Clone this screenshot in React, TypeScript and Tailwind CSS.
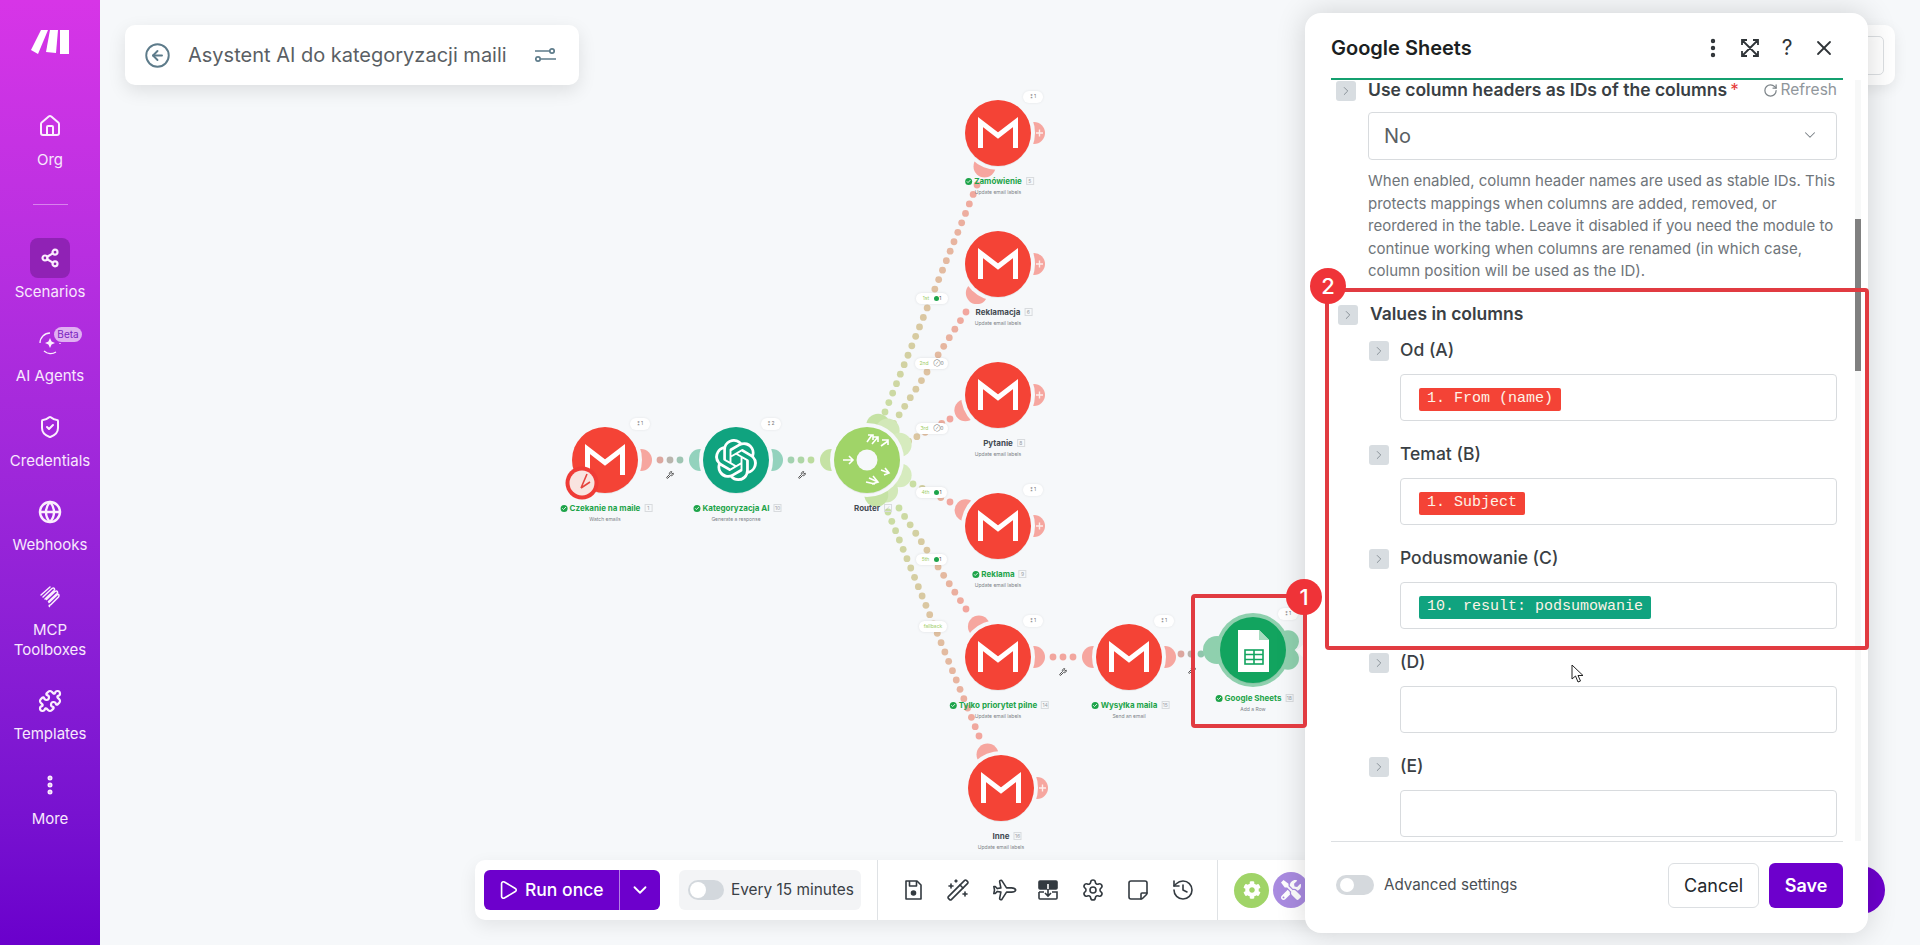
import type { ReactNode } from "react";
import {
  Check,
  ChevronDown,
  ChevronRight,
  CircleArrowLeft,
  EllipsisVertical,
  Globe,
  History,
  House,
  Play,
  Puzzle,
  RotateCw,
  Settings,
  Share2,
  ShieldCheck,
  StickyNote,
  Plane,
  WandSparkles,
  Wrench,
  X,
} from "lucide-react";
import { FaCog, FaTools } from "react-icons/fa";
import { SiOpenai } from "react-icons/si";

const mix = (a: string, b: string, t: number) => {
  const ch = (hex: string, i: number) => parseInt(hex.slice(1 + i * 2, 3 + i * 2), 16);
  const out = [0, 1, 2].map((i) => Math.round(ch(a, i) + (ch(b, i) - ch(a, i)) * t));
  return `rgb(${out.join(",")})`;
};

const GREEN_DOT = "#c9dea3";
const RED_DOT = "#f2a69e";

// dotted links of the scenario
const links = [
  { x1: 885, y1: 412, x2: 977, y2: 185, from: GREEN_DOT, to: RED_DOT },
  { x1: 888, y1: 432, x2: 966, y2: 312, from: GREEN_DOT, to: RED_DOT },
  { x1: 892, y1: 450, x2: 950, y2: 419, from: GREEN_DOT, to: RED_DOT },
  { x1: 913, y1: 484, x2: 950, y2: 502, from: GREEN_DOT, to: RED_DOT },
  { x1: 899, y1: 508, x2: 966, y2: 609, from: GREEN_DOT, to: RED_DOT },
  { x1: 888, y1: 512, x2: 979, y2: 736, from: GREEN_DOT, to: RED_DOT },
];

const straightDots = [
  { x: 660, y: 460, c: "#dca79f" },
  { x: 670, y: 460, c: "#b9b5ad" },
  { x: 680, y: 460, c: "#9ec5b3" },
  { x: 791, y: 460, c: "#a3d2b0" },
  { x: 801, y: 460, c: "#aed6a6" },
  { x: 811, y: 460, c: "#bcdc9f" },
  { x: 1053, y: 657, c: "#f2a69e" },
  { x: 1063, y: 657, c: "#f2a69e" },
  { x: 1073, y: 657, c: "#f2a69e" },
  { x: 1181, y: 654, c: "#dca79f" },
  { x: 1191, y: 654, c: "#b9b5ad" },
  { x: 1201, y: 654, c: "#8fc6ac" },
];

function Links() {
  return (
    <svg className="absolute left-0 top-0 w-[1920px] h-[945px]" viewBox="0 0 1920 945">
      {links.map((l, i) => {
        const len = Math.hypot(l.x2 - l.x1, l.y2 - l.y1);
        const n = Math.round(len / 10);
        return Array.from({ length: n + 1 }, (_, k) => (
          <circle
            key={`${i}-${k}`}
            cx={l.x1 + ((l.x2 - l.x1) * k) / n}
            cy={l.y1 + ((l.y2 - l.y1) * k) / n}
            r={3.4}
            fill={mix(l.from, l.to, k / n)}
          />
        ));
      })}
      {straightDots.map((d, i) => (
        <circle key={i} cx={d.x} cy={d.y} r={3.4} fill={d.c} />
      ))}
    </svg>
  );
}

function GmailGlyph() {
  return (
    <path
      d="M-17.5 15V-11L0 2.5L17.5 -11V15"
      fill="none"
      stroke="#fff"
      strokeWidth={5}
      strokeLinejoin="miter"
    />
  );
}

function RouterGlyph() {
  const arrows = [
    "M-24 0h10M-18 -4l4 4l-4 4",
    "M5 -16l6 -7M6 -23h5v5",
    "M0 -18l5 -7M1 -25h5v5",
    "M14 -14l7 -5M15 -20h6v5",
    "M14 10l8 3M18 8l4 5l-5 2",
    "M2 18l9 4M6 16l5 6l-6 2",
    "M-1 22l9 2",
  ];
  return (
    <>
      <circle r={10.5} fill="#f6f8fa" />
      {arrows.map((d, i) => (
        <path key={i} d={d} fill="none" stroke="#fff" strokeWidth={1.6} />
      ))}
    </>
  );
}

function SheetGlyph() {
  return (
    <>
      <path d="M-15 -20H6L16 -10V22H-15Z" fill="#fff" />
      <path d="M6 -20V-10H16Z" fill="#a7dcc0" />
      <rect x={-8} y={0} width={18} height={14} fill="none" stroke="#12a45f" strokeWidth={1.6} />
      <path d="M-8 4.5H10M-8 9.5H10M1 0V14" stroke="#12a45f" strokeWidth={1.6} />
    </>
  );
}

type Ear = { angle: number; r?: number; fill: string; plus?: boolean };

function Ears({ ears }: { ears: Ear[] }) {
  return (
    <>
      {ears.map((e, i) => {
        const a = (e.angle * Math.PI) / 180;
        const x = Math.cos(a) * 36;
        const y = Math.sin(a) * 36;
        return (
          <g key={i}>
            <circle cx={x} cy={y} r={e.r ?? 11} fill={e.fill} />
            {e.plus && (
              <path d={`M${x + 2} ${y}h7M${x + 5.5} ${y - 3.5}v7`} stroke="#fff" strokeWidth={1.4} opacity={0.8} />
            )}
          </g>
        );
      })}
    </>
  );
}

type NodeProps = {
  pos: string;
  color: string;
  ears: Ear[];
  glyph: ReactNode;
  label: string;
  sub?: string;
  num: string;
  ok?: boolean;
  tag?: string;
  ring?: string;
  extra?: ReactNode;
};

function ScenarioNode({ pos, color, ears, glyph, label, sub, num, ok, tag, ring, extra }: NodeProps) {
  return (
    <div className={`absolute w-[90px] h-[90px] ${pos}`}>
      <svg className="absolute inset-0 w-[90px] h-[90px] overflow-visible" viewBox="-45 -45 90 90">
        <Ears ears={ears} />
        <circle r={37} fill={ring ?? "#f6f8fa"} />
        <circle r={33} cy={1} fill="#000" opacity={0.06} />
        <circle r={33} fill={color} />
        {glyph}
        {extra}
      </svg>
      {tag && (
        <div className="absolute left-[70px] top-[3px] w-[20px] h-[12px] rounded-full bg-white shadow-[0_0_3px_rgba(0,0,0,0.08)] flex items-center justify-center text-[5px] text-[#777]">
          ⁑ {tag}
        </div>
      )}
      <div className="absolute left-1/2 top-[88px] -translate-x-1/2 whitespace-nowrap">
        <span
          className={`relative block text-[8px] leading-[10px] font-bold ${ok ? "text-[#1ea44a]" : "text-[#444b52]"}`}
        >
          {ok && (
            <span className="absolute right-full mr-[2px] top-[1.5px] w-[7px] h-[7px] rounded-full bg-[#1ea44a] flex items-center justify-center">
              <Check className="w-[5px] h-[5px] text-white" strokeWidth={4} />
            </span>
          )}
          {label}
          <span className="absolute left-full ml-[4px] top-[1px] w-[8px] h-[8px] border border-[#d8dbde] flex items-center justify-center text-[5px] leading-none font-normal text-[#9aa0a5]">
            {num}
          </span>
        </span>
      </div>
      {sub && (
        <div className="absolute left-1/2 top-[101px] -translate-x-1/2 whitespace-nowrap text-[5px] leading-[7px] text-[#7c8288]">
          {sub}
        </div>
      )}
    </div>
  );
}

const RED = "#f44336";
const RED_EAR = "#f6a69f";
const GREEN_EAR = "#c5e2a4";

function RouteTag({ pos, text, count }: { pos: string; text: string; count?: "ok" | "off" }) {
  return (
    <div
      className={`absolute h-[11px] rounded-full bg-white shadow-[0_0_3px_rgba(0,0,0,0.1)] flex items-center justify-center gap-[5px] text-[5px] text-[#9ccc65] ${pos}`}
    >
      <span>{text}</span>
      {count === "ok" && (
        <span className="flex items-center text-[#555]">
          <span className="w-[5px] h-[5px] rounded-full bg-[#1ea44a]" />1
        </span>
      )}
      {count === "off" && <span className="text-[#777]">⊘0</span>}
    </div>
  );
}

function Canvas() {
  const glyph = <GmailGlyph />;
  return (
    <>
      <Links />
      <ScenarioNode
        pos="left-[560px] top-[415px]"
        color={RED}
        glyph={glyph}
        ears={[{ angle: 0, fill: RED_EAR }]}
        label="Czekanie na maile"
        sub="Watch emails"
        num="1"
        ok
        tag="1"
        extra={
          <g transform="translate(-23 23)">
            <circle r={16.5} fill="#ef3b36" />
            <circle r={12.5} fill="#f9e4e0" />
            <path d="M-1 5L5 -9M-1 5L8 -1" stroke="#e5453e" strokeWidth={1.6} fill="none" />
          </g>
        }
      />
      <ScenarioNode
        pos="left-[691px] top-[415px]"
        color="#10a37f"
        glyph={<g />}
        ears={[
          { angle: 180, fill: "#93d2bd" },
          { angle: 0, fill: "#93d2bd" },
        ]}
        label="Kategoryzacja AI"
        sub="Generate a response"
        num="10"
        ok
        tag="2"
      />
      <div className="absolute left-[715px] top-[439px] text-white">
        <SiOpenai size={42} />
      </div>
      <ScenarioNode
        pos="left-[822px] top-[415px]"
        color="#a0d468"
        glyph={<RouterGlyph />}
        ears={[
          { angle: 180, fill: GREEN_EAR },
          { angle: -72, r: 12, fill: GREEN_EAR },
          { angle: -55, r: 12, fill: "#d2e8b8" },
          { angle: -25, r: 12, fill: "#d6ebbe" },
          { angle: 25, r: 12, fill: "#d6ebbe" },
          { angle: 58, r: 12, fill: "#d2e8b8" },
          { angle: 75, r: 12, fill: GREEN_EAR },
        ]}
        label="Router"
        num="⟋"
      />
      <ScenarioNode
        pos="left-[953px] top-[88px]"
        color={RED}
        glyph={glyph}
        ears={[
          { angle: 0, fill: RED_EAR, plus: true },
          { angle: 112, fill: RED_EAR },
        ]}
        label="Zamówienie"
        sub="Update email labels"
        num="5"
        ok
        tag="1"
      />
      <ScenarioNode
        pos="left-[953px] top-[219px]"
        color={RED}
        glyph={glyph}
        ears={[
          { angle: 0, fill: RED_EAR, plus: true },
          { angle: 126, fill: RED_EAR },
        ]}
        label="Reklamacja"
        sub="Update email labels"
        num="6"
      />
      <ScenarioNode
        pos="left-[953px] top-[350px]"
        color={RED}
        glyph={glyph}
        ears={[
          { angle: 0, fill: RED_EAR, plus: true },
          { angle: 155, fill: RED_EAR },
        ]}
        label="Pytanie"
        sub="Update email labels"
        num="8"
      />
      <ScenarioNode
        pos="left-[953px] top-[481px]"
        color={RED}
        glyph={glyph}
        ears={[
          { angle: 0, fill: RED_EAR, plus: true },
          { angle: 206, fill: RED_EAR },
        ]}
        label="Reklama"
        sub="Update email labels"
        num="9"
        ok
        tag="1"
      />
      <ScenarioNode
        pos="left-[953px] top-[612px]"
        color={RED}
        glyph={glyph}
        ears={[
          { angle: 0, fill: RED_EAR },
          { angle: 238, fill: RED_EAR },
        ]}
        label="Tylko priorytet pilne"
        sub="Update email labels"
        num="14"
        ok
        tag="1"
      />
      <ScenarioNode
        pos="left-[1084px] top-[612px]"
        color={RED}
        glyph={glyph}
        ears={[
          { angle: 180, fill: RED_EAR },
          { angle: 0, fill: RED_EAR },
        ]}
        label="Wysyłka maila"
        sub="Send an email"
        num="15"
        ok
        tag="1"
      />
      <ScenarioNode
        pos="left-[956px] top-[743px]"
        color={RED}
        glyph={glyph}
        ears={[
          { angle: 0, fill: RED_EAR, plus: true },
          { angle: 248, fill: RED_EAR },
        ]}
        label="Inne"
        sub="Update email labels"
        num="16"
      />
      <ScenarioNode
        pos="left-[1208px] top-[605px]"
        color="#12a45f"
        ring="#8fd0ae"
        glyph={<SheetGlyph />}
        ears={[
          { angle: 180, r: 14, fill: "#8fd0ae" },
          { angle: -14, r: 11, fill: "#8fd0ae" },
          { angle: 14, r: 11, fill: "#8fd0ae" },
        ]}
        label="Google Sheets"
        sub="Add a Row"
        num="18"
        ok
        tag="1"
      />
      <div className="absolute left-[1296px] top-[643px] w-0 h-0 border-y-[8px] border-y-transparent border-r-[9px] border-r-white" />

      <RouteTag pos="left-[916px] top-[293px] w-[32px]" text="1st" count="ok" />
      <RouteTag pos="left-[915px] top-[358px] w-[33px]" text="2nd" count="off" />
      <RouteTag pos="left-[916px] top-[423px] w-[32px]" text="3rd" count="off" />
      <RouteTag pos="left-[916px] top-[487px] w-[31px]" text="4th" count="ok" />
      <RouteTag pos="left-[916px] top-[554px] w-[31px]" text="5th" count="ok" />
      <RouteTag pos="left-[919px] top-[621px] w-[28px]" text="fallback" />

      {["left-[666px] top-[471px]", "left-[798px] top-[471px]", "left-[1059px] top-[668px]", "left-[1188px] top-[666px]"].map(
        (pos) => (
          <Wrench key={pos} className={`absolute w-[8px] h-[8px] text-[#555] ${pos}`} strokeWidth={3} />
        )
      )}
    </>
  );
}

function SideItem({ icon, label, active }: { icon: ReactNode; label: ReactNode; active?: boolean }) {
  return (
    <div className="relative flex flex-col items-center">
      <div
        className={`w-[40px] h-[40px] rounded-[8px] flex items-center justify-center ${active ? "bg-[#9022b5]" : ""}`}
      >
        {icon}
      </div>
      <div className="mt-[3.5px] text-[15px] leading-[20px] text-center text-[#f8e8fd]">{label}</div>
    </div>
  );
}

function Sidebar() {
  const iconCls = "w-[24px] h-[24px] text-[#fbeefe]";
  return (
    <aside className="w-[100px] h-full shrink-0 bg-gradient-to-b from-[#d735e7] to-[#6a00cc] flex flex-col items-center">
      <svg className="mt-[29px] w-[38px] h-[25px]" viewBox="0 0 38 25" fill="#fff">
        <path d="M0 21L10 1h7L7 25Z" />
        <path d="M19 1h8l-2 23l-10 -1Z" />
        <path d="M29 1h9v24h-9Z" />
      </svg>
      <div className="mt-[52px]">
        <SideItem icon={<House className={iconCls} />} label="Org" />
      </div>
      <div className="mt-[34.5px] w-[35px] h-px bg-white/40" />
      <div className="mt-[33px] flex flex-col gap-[21px]">
        <SideItem active icon={<Share2 className="w-[20px] h-[20px] text-[#fbeefe]" strokeWidth={2.6} />} label="Scenarios" />
        <div className="relative">
          <SideItem
            icon={
              <svg className={iconCls} viewBox="0 0 24 24" fill="none" stroke="currentColor" strokeWidth={1.3}>
                <path d="M12 7l1.6 3.4L17 12l-3.4 1.6L12 17l-1.6-3.4L7 12l3.4-1.6Z" fill="currentColor" stroke="none" />
                <path d="M2 12A10 10 0 0 1 12 2M6 20a10 10 0 0 0 12 1M22 13v-1" />
              </svg>
            }
            label="AI Agents"
          />
          <div className="absolute left-1/2 ml-[4px] top-[4px] w-[28px] h-[15px] rounded-full bg-[#e0b0f2] flex items-center justify-center text-[10px] leading-none text-[#7a1fc0]">
            Beta
          </div>
        </div>
        <SideItem icon={<ShieldCheck className={iconCls} />} label="Credentials" />
        <SideItem icon={<Globe className={iconCls} strokeWidth={2.4} />} label="Webhooks" />
        <SideItem
          icon={
            <svg className={iconCls} viewBox="0 0 24 24" fill="none" stroke="currentColor" strokeWidth={1.5} strokeLinecap="round">
              <path d="M3 11L12 3M5 13L14 4.500c2-1.500 3.500 .5 2 2L7 15M8.500 15.500L17 7.500c2-1.500 3.500 .5 2 2l-8.500 8M11 18.500L19.500 10.500c1.500-.5 2 1 1 2.500L13 20.500c-1 1.200-2.500 .5-1.500 2" />
            </svg>
          }
          label={
            <>
              MCP
              <br />
              Toolboxes
            </>
          }
        />
        <SideItem icon={<Puzzle className={iconCls} strokeWidth={2.2} />} label="Templates" />
        <SideItem icon={<EllipsisVertical className={iconCls} strokeWidth={3} />} label="More" />
      </div>
    </aside>
  );
}

function TitleBar() {
  return (
    <div className="absolute left-[125px] top-[25px] w-[454px] h-[60px] rounded-[10px] bg-white shadow-[0_6px_18px_rgba(0,0,0,0.1)] flex items-center pl-[19px]">
      <CircleArrowLeft className="w-[27px] h-[27px] text-[#5d7b8a]" strokeWidth={1.7} />
      <span className="ml-[17px] text-[20px] text-[#5a5f64] whitespace-nowrap">Asystent AI do kategoryzacji maili</span>
      <svg className="ml-[28px] w-[21px] h-[16px] text-[#5d7b8a]" viewBox="0 0 21 16" fill="none" stroke="currentColor" strokeWidth={1.7}>
        <path d="M0 4H15M6 12H21" />
        <circle cx={17} cy={4} r={2.2} fill="#fff" />
        <circle cx={3} cy={12} r={2.2} fill="#fff" />
      </svg>
    </div>
  );
}

function Toolbar() {
  const tool = "w-[24px] h-[24px] text-[#333a40]";
  return (
    <div className="absolute left-[475px] top-[860px] w-[860px] h-[60px] rounded-[10px] bg-white shadow-[0_6px_18px_rgba(0,0,0,0.08)] flex items-center pl-[9px]">
      <div className="w-[176px] h-[40px] rounded-[6px] bg-[#6d00cc] text-white flex items-center">
        <div className="w-[136px] flex items-center pl-[13px] border-r border-white/50 h-full">
          <Play className="w-[22px] h-[24px]" strokeWidth={1.8} />
          <span className="ml-[6px] text-[17.500px] font-medium whitespace-nowrap">Run once</span>
        </div>
        <ChevronDown className="ml-[9px] w-[22px] h-[22px]" strokeWidth={2} />
      </div>
      <div className="ml-[19px] w-[182px] h-[40px] rounded-[6px] bg-[#f3f4f6] flex items-center pl-[9px]">
        <div className="w-[36px] h-[20px] rounded-full bg-[#d3d8dd] flex items-center pl-[2px]">
          <div className="w-[16px] h-[16px] rounded-full bg-white" />
        </div>
        <span className="ml-[7px] text-[15.400px] text-[#3a4046] whitespace-nowrap">Every 15 minutes</span>
      </div>
      <div className="ml-[16px] w-px h-[60px] bg-[#dfe2e5]" />
      <div className="ml-[23px] flex items-center gap-[21px]">
        <svg className={tool} viewBox="0 0 24 24" fill="none" stroke="currentColor" strokeWidth={1.6} strokeLinejoin="round">
          <path d="M5 3h11l4 4v14H5Z" />
          <path d="M8.500 3v5h7V3" />
          <circle cx={12.500} cy={15} r={2} fill="currentColor" />
        </svg>
        <WandSparkles className={tool} strokeWidth={1.6} />
        <Plane className={`${tool} rotate-45`} strokeWidth={1.6} />
        <svg className={tool} viewBox="0 0 24 24" fill="none" stroke="currentColor" strokeWidth={1.6}>
          <rect x={3} y={3} width={18} height={8} rx={1} fill="currentColor" />
          <path d="M3 14v6a1 1 0 0 0 1 1h16a1 1 0 0 0 1-1v-6h-5M8 14H3" />
          <path d="M12 9v9M9 15l3 3l3-3" stroke="currentColor" />
          <path d="M12 6v5" stroke="#fff" />
        </svg>
        <Settings className={tool} strokeWidth={1.6} />
        <StickyNote className={`${tool} -scale-y-100`} strokeWidth={1.6} />
        <History className={tool} strokeWidth={1.6} />
      </div>
      <div className="ml-[22px] w-px h-[60px] bg-[#dfe2e5]" />
      <div className="ml-[16px] w-[35px] h-[35px] rounded-full bg-[#a0d468] flex items-center justify-center text-white">
        <FaCog size={18} />
      </div>
      <div className="ml-[4px] w-[36px] h-[36px] rounded-full bg-[#a98be0] flex items-center justify-center text-white">
        <FaTools size={20} />
      </div>
    </div>
  );
}

function Toggle() {
  return (
    <div className="w-[38px] h-[20px] rounded-full bg-[#d5d9dd] flex items-center pl-[4px]">
      <div className="w-[14px] h-[14px] rounded-full bg-white" />
    </div>
  );
}

function Chip() {
  return (
    <div className="shrink-0 w-[20px] h-[20px] rounded-[3px] bg-[#d8dde1] flex items-center justify-center">
      <ChevronRight className="w-[14px] h-[14px] text-[#7e878e]" strokeWidth={1.5} />
    </div>
  );
}

function ColumnField({ label, tag, tagColor }: { label: string; tag?: string; tagColor?: string }) {
  return (
    <div className="pl-[33px] h-[104px]">
      <div className="flex items-center h-[20px]">
        <Chip />
        <span className="ml-[11px] text-[17.500px] font-medium text-[#3a3f44]">{label}</span>
      </div>
      <div className="mt-[13px] ml-[31px] h-[47px] rounded-[4px] border border-[#d8dbde] flex items-center pl-[18px] pt-[5px]">
        {tag && (
          <span
            className={`h-[23px] px-[8px] rounded-[2px] text-[15px] leading-[22px] text-[#fdf3e7] whitespace-nowrap font-['Liberation_Mono',monospace] ${tagColor}`}
          >
            {tag}
          </span>
        )}
      </div>
    </div>
  );
}

function Panel() {
  return (
    <div className="absolute left-[1305px] top-[13px] w-[563px] h-[920px] rounded-[16px] bg-white shadow-[0_0_30px_rgba(0,0,0,0.16)] flex flex-col">
      <div className="h-[67px] mx-[26px] mr-[25px] border-b-2 border-[#14a06f] flex items-center pt-[4px]">
        <span className="text-[20px] font-semibold text-[#1c1f22]">Google Sheets</span>
        <div className="ml-auto flex items-center gap-[13px] pr-[7px] text-[#2f3438]">
          <EllipsisVertical className="w-[24px] h-[24px]" strokeWidth={2.4} />
          <svg className="w-[24px] h-[24px]" viewBox="0 0 24 24" fill="none" stroke="currentColor" strokeWidth={1.8}>
            <path d="M4 9V4h5M15 4h5v5M20 15v5h-5M9 20H4v-5M4 4l16 16M20 4L4 20" />
          </svg>
          <span className="w-[24px] h-[24px] flex items-center justify-center text-[21px] leading-none">?</span>
          <X className="w-[24px] h-[24px]" strokeWidth={1.8} />
        </div>
      </div>
      <div className="flex-1 min-h-0 flex overflow-hidden">
        <div className="flex-1 min-w-0 pl-[31px] pr-[18px] pt-[1px]">
          <div className="flex items-center h-[20px]">
            <Chip />
            <span className="ml-[12px] -mt-[2px] text-[17.500px] leading-[18px] font-semibold text-[#3a3f44] whitespace-nowrap">
              Use column headers as IDs of the columns
            </span>
            <span className="ml-[3px] -mt-[2px] text-[17px] leading-[18px] text-[#e53935]">*</span>
            <RotateCw className="ml-auto -mt-[2px] w-[15px] h-[15px] text-[#7d8489]" />
            <span className="ml-[3px] -mt-[2px] text-[15.500px] leading-[18px] text-[#90969b]">Refresh</span>
          </div>
          <div className="mt-[11px] ml-[32px] h-[48px] rounded-[4px] border border-[#d8dbde] flex items-center px-[15px]">
            <span className="text-[20px] text-[#5a5f64]">No</span>
            <ChevronDown className="ml-auto mr-[2px] mb-[3px] w-[18px] h-[18px] text-[#777e84]" strokeWidth={1.4} />
          </div>
          <p className="mt-[10px] ml-[32px] text-[15px] leading-[22.500px] text-[#6f757a]">
            When enabled, column header names are used as stable IDs. This protects mappings when columns are added,
            removed, or reordered in the table. Leave it disabled if you need the module to continue working when columns
            are renamed (in which case, column position will be used as the ID).
          </p>
          <div className="mt-[22px] pl-[2px] flex items-center h-[20px]">
            <Chip />
            <span className="ml-[12px] text-[17.500px] font-semibold text-[#3a3f44]">Values in columns</span>
          </div>
          <div className="mt-[16px]">
            <ColumnField label="Od (A)" tag="1. From (name)" tagColor="bg-[#f44336]" />
            <ColumnField label="Temat (B)" tag="1. Subject" tagColor="bg-[#f44336]" />
            <ColumnField label="Podusmowanie (C)" tag="10. result: podsumowanie" tagColor="bg-[#10a37f]" />
            <ColumnField label="(D)" />
            <ColumnField label="(E)" />
          </div>
        </div>
        <div className="w-[6px] mr-[7px] bg-[#f7f8f8]">
          <div className="mt-[139px] h-[152px] bg-[#808080]" />
        </div>
      </div>
      <div className="h-[92px] mx-[26px] mr-[25px] border-t border-[#dcdfe2] flex items-center pb-[5px] pl-[5px]">
        <Toggle />
        <span className="ml-[10px] text-[15.200px] text-[#4a4f54]">Advanced settings</span>
        <button className="ml-auto w-[91px] h-[45px] rounded-[6px] border border-[#dcdfe2] bg-white text-[18px] text-[#24282c]">
          Cancel
        </button>
        <button className="ml-[10px] w-[74px] h-[45px] rounded-[6px] bg-[#6d00cc] text-[18px] font-semibold text-white">
          Save
        </button>
      </div>
    </div>
  );
}

function Annotation({ pos, badgePos, n }: { pos: string; badgePos: string; n: string }) {
  return (
    <>
      <div className={`absolute border-[4px] border-[#e13b41] rounded-[4px] ${pos}`} />
      <div
        className={`absolute w-[36px] h-[36px] rounded-full bg-[#ef3338] flex items-center justify-center text-[22px] font-medium text-white ${badgePos}`}
      >
        {n}
      </div>
    </>
  );
}

export default function App() {
  return (
    <div className="relative flex w-full h-screen overflow-hidden bg-[#f6f8fa] font-['Inter',sans-serif]">
      <Sidebar />
      <Canvas />
      <TitleBar />
      {/* card mostly hidden by the module panel */}
      <div className="absolute left-[1800px] top-[25px] w-[95px] h-[60px] rounded-[10px] bg-white shadow-[0_4px_14px_rgba(0,0,0,0.08)] flex items-center justify-end pr-[11px]">
        <div className="w-[60px] h-[39px] rounded-[5px] border border-[#dcdfe2]" />
      </div>
      <div className="absolute left-[1837px] top-[866px] w-[48px] h-[48px] rounded-full bg-[#6d00cc]" />
      <Toolbar />
      <Panel />
      <Annotation pos="left-[1191px] top-[594px] w-[116px] h-[134px]" badgePos="left-[1286px] top-[579px]" n="1" />
      <Annotation pos="left-[1325px] top-[288px] w-[544px] h-[362px]" badgePos="left-[1310px] top-[268px]" n="2" />
      <svg className="absolute left-[1571px] top-[664px] w-[13px] h-[20px]" viewBox="0 0 13 20">
        <path d="M1 1V15L4.500 12L7 18L9.500 17L7 11.500H12Z" fill="#fff" stroke="#222" strokeWidth={1} />
      </svg>
    </div>
  );
}
